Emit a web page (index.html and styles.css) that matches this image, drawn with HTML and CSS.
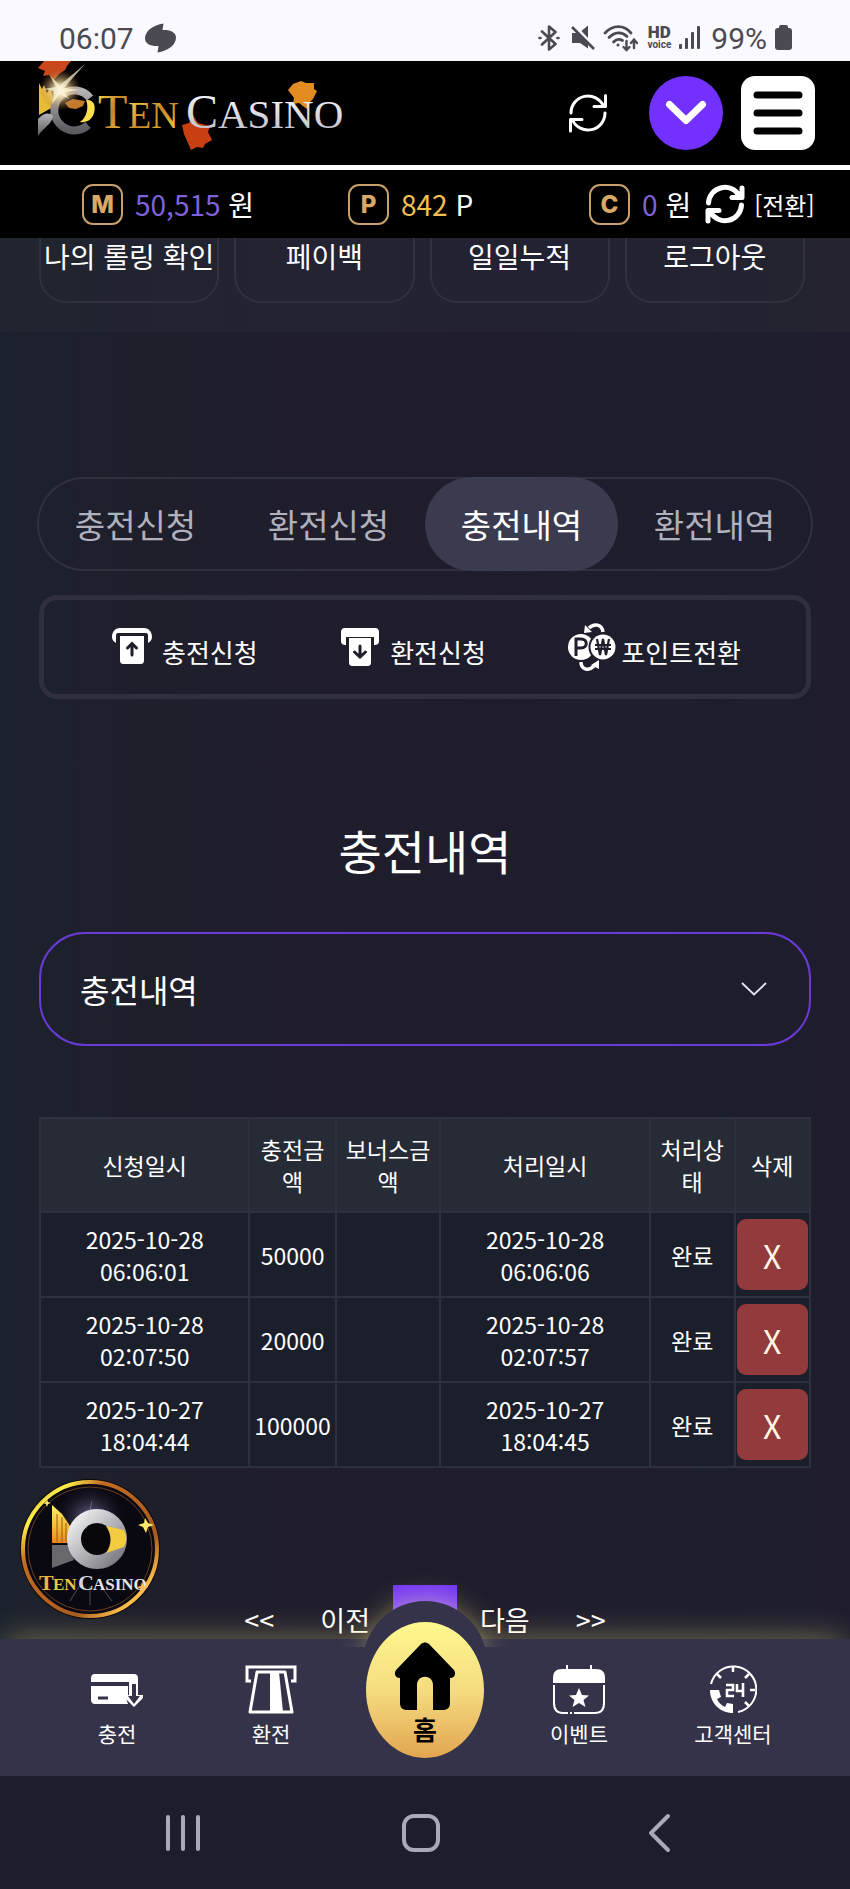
FILE: index.html
```
<!DOCTYPE html>
<html lang="ko">
<head>
    <meta charset="UTF-8">
    <meta name="viewport" content="width=device-width, initial-scale=1.0">
    <title>충전내역 - TEN CASINO</title>
    <link rel="stylesheet" href="styles.css">
</head>
<body>
    <!-- 상태바 -->
    <div class="status-bar">
        <div class="status-left">
            <span>06:07</span>
            <svg width="31" height="30" viewBox="0 0 31 30"><path fill="#4b4a52" d="M18.500 0.500 C8 2 0 8 0 15.500 C0 21 6 23.500 13.500 23 L12.500 29.500 C23 28 31 22 31 14.500 C31 9 25 6.500 17.500 7 Z"/></svg>
        </div>
        <div class="status-right">
            <svg width="22" height="26" viewBox="0 0 22 26" fill="none" stroke="#4b4a52" stroke-width="2.600" stroke-linejoin="round" stroke-linecap="round"><path d="M4 6.500 17.500 19 11 24.500V1.500L17.500 7 4 19.500"/><path d="M1.500 13h1M19.500 13h1"/></svg>
            <svg class="mute" width="24" height="26" viewBox="0 0 24 26"><path fill="#4b4a52" d="M1 8h7l9-7.500v23L9 18H1z"/><path stroke="#faf9ff" stroke-width="3" d="M3 0l20 22"/><path stroke="#4b4a52" stroke-width="2.600" d="M1 2l22 22"/></svg>
            <svg class="wifi" width="36" height="28" viewBox="0 0 36 28" fill="none" stroke="#4b4a52" stroke-width="2.800" stroke-linecap="round"><path d="M2 9C10 0.500 21 0.500 28 9M6 13.500C12 7.500 19 7.500 24 12.500M10.500 18C13.500 15 17 15 19.500 16.500"/><circle cx="15" cy="21" r="1.500" fill="#4b4a52" stroke="none"/><path stroke-width="2.400" d="M23.500 17v9M20.500 23l3 3 3-3M31 24v-8M28 19l3-3.500 3 3.500"/></svg>
            <span class="hd"><b>HD</b><small>voice</small></span>
            <svg width="22" height="24" viewBox="0 0 22 24" fill="#4b4a52"><rect x="0" y="18" width="3" height="5" rx="1"/><rect x="6" y="12" width="3" height="11" rx="1"/><rect x="12" y="6" width="3" height="17" rx="1"/><rect x="18" y="0" width="3" height="23" rx="1"/></svg>
            <span class="percent">99%</span>
            <svg width="17" height="26" viewBox="0 0 17 26" fill="#4b4a52"><rect x="4" y="0" width="9" height="6" rx="2"/><rect x="0" y="3" width="17" height="22" rx="3"/></svg>
        </div>
    </div>

    <!-- 상단 헤더 -->
    <header class="header">
        <a class="logo" href="#" aria-label="TEN CASINO">
            <svg width="312" height="96" viewBox="0 0 312 96">
                <defs>
                    <linearGradient id="gold" x1="0" y1="0" x2="1" y2="1"><stop offset="0" stop-color="#ffe25a"/><stop offset=".5" stop-color="#c78425"/><stop offset="1" stop-color="#f5d94a"/></linearGradient>
                    <linearGradient id="silver" x1="0" y1="0" x2="0" y2="1"><stop offset="0" stop-color="#ffffff"/><stop offset="1" stop-color="#b8b8c2"/></linearGradient>
                    <linearGradient id="steel" x1="0" y1="0" x2="0" y2="1"><stop offset="0" stop-color="#b4b4b8"/><stop offset="1" stop-color="#5b5b60"/></linearGradient>
                    <radialGradient id="flare"><stop offset="0" stop-color="#ffffff"/><stop offset=".3" stop-color="#ffe9b0" stop-opacity=".8"/><stop offset="1" stop-color="#a86a30" stop-opacity="0"/></radialGradient>
                </defs>
                <path fill="#c9481c" d="M6 0h27l-4 5-2 4-6 4-5 6-5-5-6 1 2-5-7-3z"/>
                <path fill="#e8bc35" d="M1 22l3 6 2-4 3 8 3-5 3 9v10L1 54z"/>
                <path fill="#ffe04a" d="M48 39c8-1 10 6 8 13-2 7-8 10-14 9 7-5 9-15 6-22z"/>
                <path fill="#c27a2c" d="M27 42l8-4 12 2-2 5-7 3-7-1z"/>
                <path fill="none" stroke="url(#steel)" stroke-width="8" d="M52 37A20 20 0 1 0 50 64"/>
                <path fill="url(#steel)" d="M0 58c6-6 11-7 15-3-1 8-8 10-15 20z"/>
                <circle cx="22" cy="29" r="21" fill="url(#flare)"/>
                <path fill="#fff7dc" d="M47 3L26 27l16 2-16 2 5 7-9-5-8 10 2-13L5 28l13-2-6-11 10 9z" opacity=".7"/>
                <path fill="#e38c21" d="M250 29l5-6 8-3 5 2 8 0 0 6 3 2-4 8-4 4-2 6-8-6-6 1 1-6z"/>
                <path fill="#c84012" d="M155 54l5 8 12 3-2 6 4 8-7 4-2 4-6-1-6 3-3-7-4-9-2-9 7-2z"/>
                <g font-family="Liberation Serif, serif">
                    <text x="60" y="67" font-size="48" fill="url(#gold)">T</text>
                    <text x="90" y="67" font-size="38" fill="url(#gold)">EN</text>
                    <text x="148" y="67" font-size="48" fill="url(#silver)">C</text>
                    <text x="180" y="67" font-size="41" fill="url(#silver)">ASINO</text>
                </g>
            </svg>
        </a>
        <div class="header-btns">
            <button class="icon-btn" type="button" aria-label="새로고침">
                <svg width="40" height="40" viewBox="0 0 40 40" fill="none" stroke="#fff" stroke-width="3" stroke-linecap="round" stroke-linejoin="round"><path d="M3 20A17 17 0 0 1 35.500 13M37.500 2.500V13.500H26M37 20A17 17 0 0 1 4.500 27M2.500 38V26.500H14"/></svg>
            </button>
            <button class="icon-btn down-btn" type="button" aria-label="펼치기">
                <svg width="42" height="26" viewBox="0 0 42 26" fill="none" stroke="#fff" stroke-width="7" stroke-linecap="round" stroke-linejoin="round"><path d="M4.500 4.500 21 20.500 37.500 4.500"/></svg>
            </button>
            <button class="icon-btn menu-btn" type="button" aria-label="메뉴">
                <svg width="50" height="46" viewBox="0 0 50 46" stroke="#000" stroke-width="7" stroke-linecap="round"><path d="M4 5h42M4 23h42M4 41h42"/></svg>
            </button>
        </div>
    </header>

    <!-- 보유금액 -->
    <div class="balance">
        <div class="balance-item">
            <span class="coin">M</span>
            <span><span class="purple">50,515</span> 원</span>
        </div>
        <div class="balance-item">
            <span class="coin">P</span>
            <span><span class="yellow">842</span> P</span>
        </div>
        <div class="balance-item">
            <span class="coin">C</span>
            <span><span class="purple">0</span> 원</span>
            <a class="exchange" href="#">
                <svg width="40" height="40" viewBox="0 0 40 40" fill="none" stroke="#fff" stroke-width="5" stroke-linecap="round" stroke-linejoin="round"><path d="M3.500 19A16.500 16.500 0 0 1 34.500 12M37 4V13.500H27M36.500 21A16.500 16.500 0 0 1 5.500 28M3 37V26.500H14"/></svg>
                [전환]
            </a>
        </div>
    </div>

    <nav class="quick">
        <a href="#">나의 롤링 확인</a>
        <a href="#">페이백</a>
        <a href="#">일일누적</a>
        <a href="#">로그아웃</a>
    </nav>

    <main class="content">
        <nav class="tabs">
            <a href="#">충전신청</a>
            <a href="#">환전신청</a>
            <a href="#" class="active">충전내역</a>
            <a href="#">환전내역</a>
        </nav>

        <div class="actions">
            <a href="#">
                <svg width="40" height="38" viewBox="0 0 40 38"><path fill="#fff" d="M8 0h24c5 0 8 4 8 9 0 3-2 5-4 6V7c0-1-1-2-2-2H6C5 5 4 6 4 7v8C2 14 0 12 0 9 0 4 3 0 8 0z"/><path fill="#fff" d="M8 8h24v24c0 3-1 4-4 4H12c-3 0-4-1-4-4z"/><path fill="none" stroke="#1f1e2b" stroke-width="3" stroke-linecap="round" d="M20 27V16M15.500 20l4.500-4.500 4.500 4.500"/></svg>
                <span>충전신청</span>
            </a>
            <a href="#">
                <svg width="40" height="38" viewBox="0 0 40 38"><path fill="#fff" d="M5 0h30c3 0 4 2 4 4v9c0 3-2 4-5 4V9H6v8c-3 0-5-1-5-4V4c0-2 1-4 4-4z"/><path fill="#fff" d="M9 10h22v24c0 3-1 4-4 4H13c-3 0-4-1-4-4z"/><path fill="none" stroke="#1f1e2b" stroke-width="3" stroke-linecap="round" d="M20 18v11M14.500 24l5.500 5 5.500-5"/></svg>
                <span>환전신청</span>
            </a>
            <a href="#" class="point">
                <svg width="48" height="48" viewBox="0 0 48 48"><circle cx="13" cy="24" r="13" fill="#fff"/><circle cx="35" cy="24" r="14.500" fill="#1f1e2b"/><circle cx="35" cy="24" r="12.500" fill="#fff"/><path fill="none" stroke="#1f1e2b" stroke-width="3" d="M8 33V16h5c7 0 7 9 0 9H8"/><path fill="none" stroke="#1f1e2b" stroke-width="2.200" d="M29 16l3 16 3-16 3 16 3-16M27 22h16M27 26h16"/><path fill="none" stroke="#fff" stroke-width="3.500" d="M35 9C34 1 26 0 21 5M13 39c0 7 7 10 13 4"/><path fill="#fff" d="M16 10l1-8 7 7zM31 37l0 9-8-4z"/></svg>
                <span>포인트전환</span>
            </a>
        </div>

        <h1>충전내역</h1>

        <div class="select-wrap">
            <select aria-label="내역 선택">
                <option>충전내역</option>
                <option>환전내역</option>
            </select>
            <svg width="26" height="14" viewBox="0 0 26 14" fill="none" stroke="#e6e6ee" stroke-width="1.800"><path d="M1 1l12 11.500L25 1"/></svg>
        </div>

        <table class="history">
            <colgroup>
                <col class="col-date"><col class="col-amount"><col class="col-bonus"><col class="col-date"><col class="col-state"><col class="col-del">
            </colgroup>
            <thead>
                <tr>
                    <th>신청일시</th>
                    <th>충전금액</th>
                    <th>보너스금액</th>
                    <th>처리일시</th>
                    <th>처리상태</th>
                    <th>삭제</th>
                </tr>
            </thead>
            <tbody>
                <tr>
                    <td>2025-10-28<br>06:06:01</td>
                    <td>50000</td>
                    <td></td>
                    <td>2025-10-28<br>06:06:06</td>
                    <td>완료</td>
                    <td><button class="del-btn" type="button">X</button></td>
                </tr>
                <tr>
                    <td>2025-10-28<br>02:07:50</td>
                    <td>20000</td>
                    <td></td>
                    <td>2025-10-28<br>02:07:57</td>
                    <td>완료</td>
                    <td><button class="del-btn" type="button">X</button></td>
                </tr>
                <tr>
                    <td>2025-10-27<br>18:04:44</td>
                    <td>100000</td>
                    <td></td>
                    <td>2025-10-27<br>18:04:45</td>
                    <td>완료</td>
                    <td><button class="del-btn" type="button">X</button></td>
                </tr>
            </tbody>
        </table>

        <div class="pager">
            <a href="#">&lt;&lt;</a>
            <a href="#">이전</a>
            <a href="#" class="current" aria-label="1"></a>
            <a href="#">다음</a>
            <a href="#">&gt;&gt;</a>
        </div>
    </main>

    <div class="bottom">
        <!-- 플로팅 로고 -->
        <a class="float-logo" href="#" aria-label="TEN CASINO">
            <svg width="140" height="140" viewBox="0 0 140 140">
                <defs>
                    <linearGradient id="ring" x1="0" y1="0" x2="1" y2="1"><stop offset="0" stop-color="#b5651f"/><stop offset=".17" stop-color="#fff04a"/><stop offset=".3" stop-color="#c26a22"/><stop offset=".7" stop-color="#a85c22"/><stop offset=".85" stop-color="#ffc04a"/><stop offset="1" stop-color="#c26a22"/></linearGradient>
                    <linearGradient id="wing" x1="0" y1="0" x2="0" y2="1"><stop offset="0" stop-color="#fff36a"/><stop offset=".6" stop-color="#f2b632"/><stop offset="1" stop-color="#e88820"/></linearGradient>
                    <linearGradient id="metal" x1="0" y1="0" x2="1" y2="1"><stop offset="0" stop-color="#f2f2f5"/><stop offset="1" stop-color="#77777d"/></linearGradient>
                    <radialGradient id="haze"><stop offset="0" stop-color="#8f86b8" stop-opacity=".8"/><stop offset="1" stop-color="#16121f" stop-opacity="0"/></radialGradient>
                </defs>
                <circle cx="70" cy="70" r="70" fill="#0c0808"/>
                <circle cx="70" cy="70" r="67" fill="#0a0912" stroke="url(#ring)" stroke-width="4"/>
                <circle cx="70" cy="70" r="62" fill="none" stroke="#6b4120" stroke-width="1"/>
                <circle cx="70" cy="40" r="36" fill="url(#haze)"/>
                <path fill="url(#wing)" d="M32 26l10 9 8 12 2 17H32z"/>
                <path stroke="#9a5a14" stroke-width="1" d="M37 35v28M42 38v25M46 44v19"/>
                <path fill="#68686c" d="M32 66h17l5 15-22 8z"/>
                <circle cx="77" cy="60" r="23" fill="#09070c" stroke="url(#metal)" stroke-width="14"/>
                <path fill="#f2cb3f" d="M86 47l18 4c3 6 3 12 0 17l-18 6c6-9 6-18 0-27z"/>
                <path fill="#ffe76a" d="M125 39l3 5 6 2-6 2-2 6-3-6-5-2 6-2zM27 20l1 3 3 1-3 1-1 3-1-3-3-1 3-1z"/>
                <path stroke="#c9c4da" stroke-width="1" opacity=".35" d="M72 22L66 50M50 122l10-16M70 126v-18M92 122l-12-16"/>
                <g font-family="Liberation Serif, serif" font-weight="bold">
                    <text x="19" y="111" font-size="22" fill="#e5b548">T</text>
                    <text x="33" y="111" font-size="17" fill="#e5c93c">EN</text>
                    <text x="58" y="111" font-size="22" fill="#d6d6dc">C</text>
                    <text x="73" y="111" font-size="17" fill="#e4e4ea">ASINO</text>
                </g>
                <path fill="#ffbd5a" d="M122 103l2 4 4 1-4 2-2 4-1-4-4-2 4-1z"/>
            </svg>
        </a>

        <!-- 하단 메뉴 -->
        <nav class="tab-bar">
            <a href="#">
                <svg width="52" height="50" viewBox="0 0 52 50"><path fill="#fff" d="M4 9h39c3 0 4 2 4 4v4H0v-4c0-2 1-4 4-4zM0 21h37v9h-3l3 9H4c-3 0-4-2-4-4z"/><path stroke="#343349" stroke-width="3" d="M7 33h10"/><path fill="#fff" d="M38 15h9v15h5v3l-9 9-9-9v-3h4z"/><path fill="#343349" d="M41 19h4v12h4l-6 8-6-8h4z"/></svg>
                <span>충전</span>
            </a>
            <a href="#">
                <svg width="52" height="50" viewBox="0 0 52 50"><path fill="none" stroke="#fff" stroke-width="3" d="M6 16H2V2h48v14h-4"/><path fill="none" stroke="#fff" stroke-width="3" stroke-linejoin="round" d="M12 7h28l7 40H5z"/><path fill="#fff" d="M25 7h9l4 40H25z"/></svg>
                <span>환전</span>
            </a>
            <a href="#" class="home">
                <span class="home-inner">
                    <svg width="62" height="70" viewBox="0 0 62 70"><path fill="#000" d="M27 2c3-2 5-2 8 0l24 25c4 4 2 9-3 9v25c0 5-3 7-7 7H39V43c0-11-16-11-16 0v25H13c-4 0-7-2-7-7V36c-5 0-7-5-3-9z"/></svg>
                    <b>홈</b>
                </span>
            </a>
            <a href="#">
                <svg width="52" height="50" viewBox="0 0 52 50"><path fill="#fff" d="M9 4h34c6 0 9 3 9 9v5H0v-5c0-6 3-9 9-9z"/><path fill="none" stroke="#fff" stroke-width="2" d="M14 0v6M38 0v6M1 20v18c0 7 3 10 9 10h5M17 48h2M21 48h21c6 0 9-3 9-10V20"/><path fill="#fff" d="M26 23l3 7 7 .500-5.500 4.500 2 7-6.500-4-6.500 4 2-7L16 30.500l7-.500z"/></svg>
                <span>이벤트</span>
            </a>
            <a href="#">
                <svg width="48" height="50" viewBox="0 0 48 50" fill="none" stroke="#fff" stroke-width="2"><path d="M2 19A23 23 0 1 1 29 47"/><path d="M24 2v5M41 25h5M8 9l4 4M40 9l-4 4M36 37l4 4" stroke-width="2.500"/><path stroke-width="2.600" d="M17 20h7v5h-6v6h7M28 19v7h6M34 18v14"/><path fill="#fff" stroke="none" d="M1 25h9l2 7-4 2c2 4 4 6 8 8l2-4 6 1v9C11 48 1 38 1 25z"/></svg>
                <span>고객센터</span>
            </a>
        </nav>
    </div>

    <!-- 시스템 내비게이션 -->
    <div class="sys-nav">
        <button class="icon-btn" type="button" aria-label="최근 앱"><svg width="36" height="40" viewBox="0 0 36 40" stroke="#a9a9b8" stroke-width="4" stroke-linecap="round"><path d="M3 4v32M18 4v32M33 4v32"/></svg></button>
        <button class="icon-btn" type="button" aria-label="홈 화면"><svg width="40" height="40" viewBox="0 0 40 40" fill="none" stroke="#a9a9b8" stroke-width="4"><rect x="3" y="3" width="34" height="34" rx="10"/></svg></button>
        <button class="icon-btn" type="button" aria-label="뒤로"><svg width="32" height="40" viewBox="0 0 32 40" fill="none" stroke="#a9a9b8" stroke-width="4" stroke-linecap="round" stroke-linejoin="round"><path d="M28 3L11 20l17 17"/></svg></button>
    </div>
</body>
</html>
```
FILE: styles.css
```
* {
    box-sizing: border-box;
}
body {
    margin: 0;
    min-height: 100vh;
    display: flex;
    flex-direction: column;
    font-family: "Noto Sans CJK KR", sans-serif;
    color: #fff;
    background: linear-gradient(90deg, #1c222d 0%, #1f1e2b 20%, #1f1d2d 60%, #1d1e2d 85%, #1f1d2d 100%);
}
a {
    color: inherit;
    text-decoration: none;
}
svg {
    display: block;
    flex-shrink: 0;
}
.icon-btn {
    display: flex;
    align-items: center;
    justify-content: center;
    padding: 0;
    border: none;
    background: none;
    cursor: pointer;
}

/* 상태바 */
.status-bar {
    height: 61px;
    padding: 14px 58px 0 59px;
    display: flex;
    justify-content: space-between;
    background: #faf9ff;
    color: #4b4a52;
    font-family: Roboto, sans-serif;
    font-size: 30px;
}
.status-left,
.status-right {
    display: flex;
    align-items: center;
    height: 48px;
}
.status-left {
    gap: 11px;
}
.status-right {
    gap: 8px;
}
.mute {
    margin-left: 3px;
}
.hd {
    display: flex;
    flex-direction: column;
    align-items: center;
    font-size: 17px;
    line-height: 14px;
}
.hd b {
    font-weight: 900;
}
.hd small {
    font-size: 10px;
    line-height: 12px;
    font-weight: 700;
}
.percent {
    margin-left: 2px;
}

/* 헤더 */
.header {
    height: 109px;
    display: flex;
    justify-content: space-between;
    padding: 0 35px 0 38px;
    background: #000;
    border-bottom: 5px solid #fff;
}
.header-btns {
    display: flex;
    align-items: center;
}
.down-btn {
    width: 74px;
    height: 74px;
    margin: 0 18px 0 41px;
    border-radius: 50%;
    background: #7331ff;
}
.menu-btn {
    width: 74px;
    height: 74px;
    border-radius: 14px;
    background: #fff;
}

/* 보유금액 */
.balance {
    height: 68px;
    display: grid;
    grid-template-columns: 266fr 241fr 261fr;
    padding-left: 82px;
    align-items: center;
    background: #000;
    font-size: 28px;
    white-space: nowrap;
}
.balance-item {
    display: flex;
    align-items: center;
    gap: 12px;
}
.coin {
    width: 41px;
    height: 41px;
    border: 2px solid #c79f6c;
    border-radius: 11px;
    color: #d9a868;
    font-family: Inter, sans-serif;
    font-weight: 800;
    font-size: 24px;
    line-height: 38px;
    text-align: center;
}
.purple {
    color: #7f62d8;
}
.yellow {
    color: #f2c04e;
}
.exchange {
    display: flex;
    align-items: center;
    gap: 9px;
    margin-left: 2px;
    font-size: 24px;
}

/* 퀵메뉴 */
.quick {
    height: 94px;
    display: grid;
    grid-template-columns: repeat(4, 1fr);
    gap: 15px;
    align-items: start;
    padding: 0 45px 0 39px;
    background: linear-gradient(90deg, #20252f, #232331 35%, #222233 60%, #24232f);
}
.quick a {
    height: 65px;
    border: 2px solid #31313d;
    border-top: none;
    border-radius: 0 0 27px 27px;
    font-size: 28px;
    line-height: 36px;
    text-align: center;
    white-space: nowrap;
}

.content {
    padding: 145px 39px 0;
}

/* 탭 */
.tabs {
    display: grid;
    grid-template-columns: repeat(4, 1fr);
    margin: 0 -2px 24px;
    padding: 0 2px;
    border-radius: 47px;
    box-shadow: inset 0 0 0 2px #31313e;
}
.tabs a {
    border-radius: 47px;
    font-size: 33px;
    line-height: 94px;
    text-align: center;
    color: #b1b0bd;
}
.tabs .active {
    background: #3b3b50;
    color: #fff;
}

.actions {
    height: 104px;
    display: flex;
    align-items: center;
    justify-content: space-between;
    padding: 0 65px 0 68px;
    border: 5px solid #302f3d;
    border-radius: 18px;
    font-size: 26px;
}
.actions a {
    display: flex;
    align-items: center;
    gap: 10px;
}
.actions .point {
    gap: 5px;
}
.actions span {
    padding-top: 8px;
}

h1 {
    margin: 121px 0 52px;
    font-size: 47px;
    line-height: 60px;
    font-weight: 400;
    text-align: center;
}

/* 셀렉트 */
.select-wrap {
    position: relative;
    margin-bottom: 71px;
}
.select-wrap select {
    display: block;
    width: 100%;
    height: 114px;
    padding: 0 39px;
    border: 2px solid #6a3ad6;
    border-radius: 46px;
    background: transparent;
    color: #fff;
    font-family: inherit;
    font-size: 32px;
    -webkit-appearance: none;
    appearance: none;
}
.select-wrap svg {
    position: absolute;
    right: 44px;
    top: 50px;
    pointer-events: none;
}

/* 내역 테이블 */
.history {
    width: 100%;
    table-layout: fixed;
    border-collapse: collapse;
    background: #1b1f2c;
    font-size: 23px;
    line-height: 32px;
    text-align: center;
}
.history th,
.history td {
    padding: 0;
    border: 2px solid #2e313d;
}
.history th {
    height: 94px;
    padding: 0 8px;
    background: #272b36;
    font-weight: 400;
    word-break: break-all;
}
.history td {
    height: 85px;
}
.col-date {
    width: 27.2%;
}
.col-amount {
    width: 11.2%;
}
.col-bonus {
    width: 13.600%;
}
.col-state {
    width: 11%;
}
.del-btn {
    display: block;
    width: 71px;
    height: 71px;
    margin: 0 auto;
    padding: 0;
    border: none;
    border-radius: 9px;
    background: #933a3c;
    color: #fff5e6;
    font-family: inherit;
    font-size: 32px;
    cursor: pointer;
}

/* 페이지 */
.pager {
    display: flex;
    justify-content: center;
    margin-top: 117px;
    font-size: 27px;
    line-height: 70px;
}
.pager a {
    height: 74px;
    padding: 0 23px;
}
.pager .current {
    width: 64px;
    padding: 0;
    background: linear-gradient(#7337f5, #a56bff);
}

/* 하단 메뉴 */
.bottom {
    position: relative;
    margin-top: -20px;
}
.float-logo {
    position: absolute;
    left: 20px;
    top: -160px;
}
.tab-bar {
    height: 137px;
    display: grid;
    grid-template-columns: repeat(5, 1fr);
    padding: 0 40px;
    background: #343349;
    box-shadow: 0 -6px 30px -6px rgba(255, 240, 140, 0.4);
    font-size: 21px;
    line-height: 30px;
}
.tab-bar a {
    display: flex;
    flex-direction: column;
    align-items: center;
    gap: 3px;
    padding-top: 26px;
}
.tab-bar .home {
    position: relative;
    justify-self: center;
    width: 124px;
    margin-top: -38px;
    padding-top: 21px;
}
/* 홈 버튼 뒤쪽 원, 메뉴바 위로 올라온 부분만 보임 */
.home::before {
    content: "";
    position: absolute;
    left: 0;
    top: 0;
    width: 124px;
    height: 124px;
    border-radius: 50%;
    background: #343349;
    box-shadow: 0 -4px 30px -6px rgba(255, 240, 140, 0.5);
    clip-path: inset(-40px -40px 78px -40px);
}
.home-inner {
    position: relative;
    flex-shrink: 0;
    width: 118px;
    height: 136px;
    display: flex;
    flex-direction: column;
    align-items: center;
    padding-top: 20px;
    border-radius: 50%;
    background: linear-gradient(#fff88f, #f5dc80 50%, #e2a550);
    color: #000;
    font-size: 26px;
    line-height: 34px;
}

.sys-nav {
    position: relative;
    flex: 1;
    min-height: 113px;
    display: flex;
    align-items: center;
    justify-content: space-between;
    padding: 0 178px 0 165px;
    background: #1c1d2d;
}
```
